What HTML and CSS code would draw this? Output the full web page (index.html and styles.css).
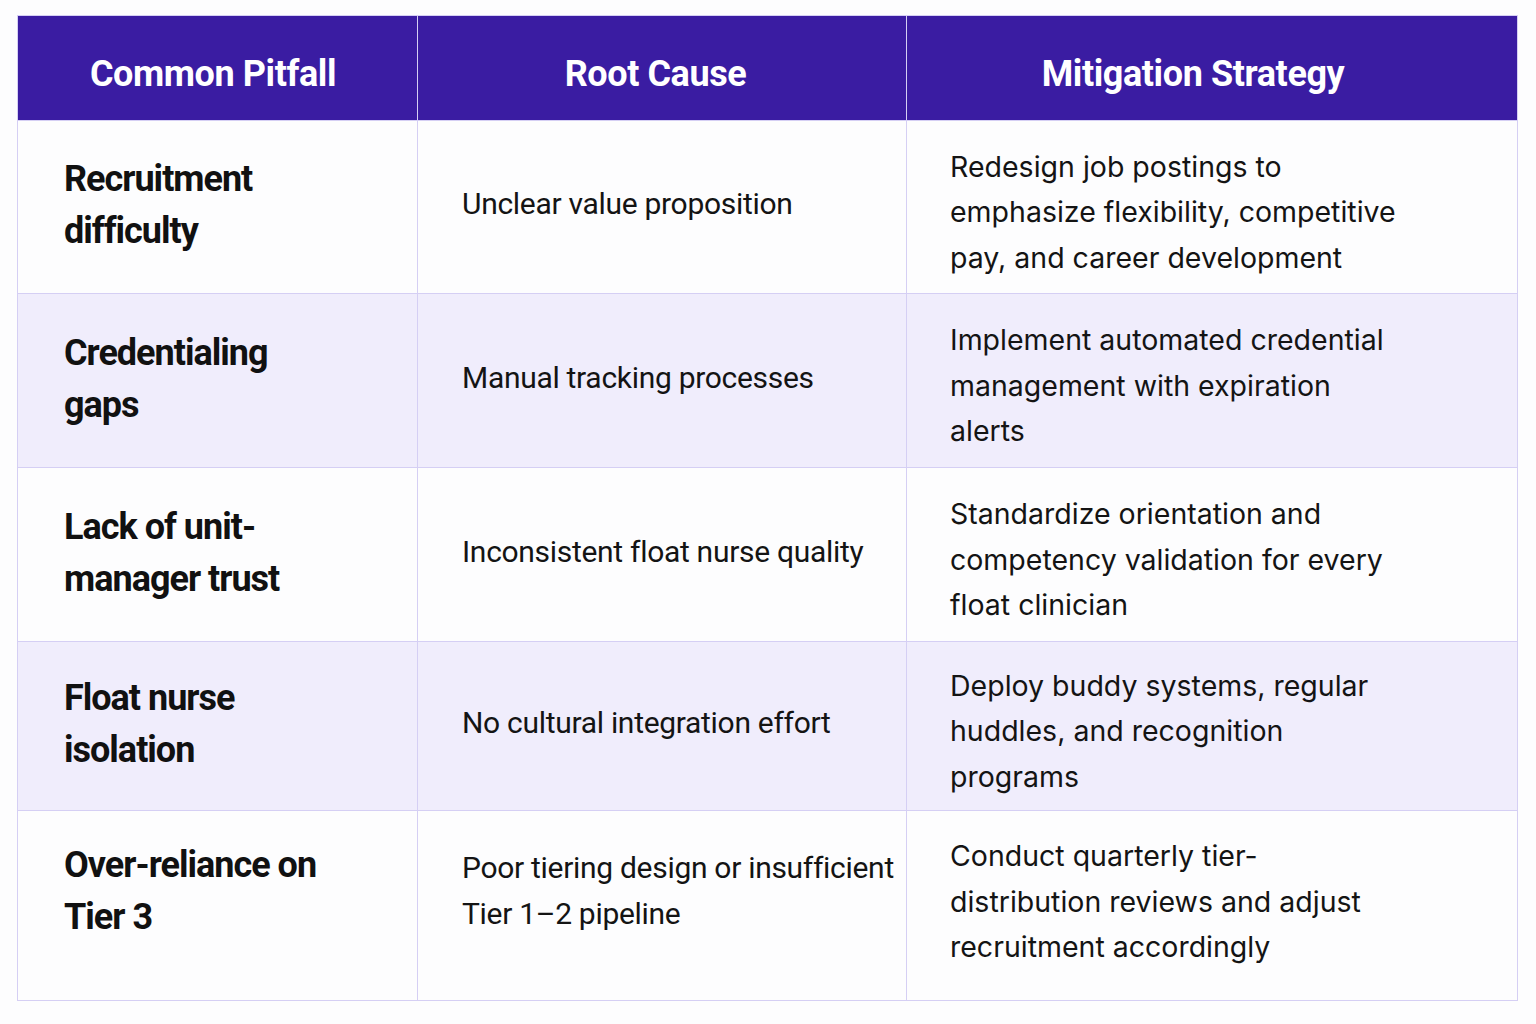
FILE: index.html
```html
<!DOCTYPE html>
<html lang="en">
<head>
<meta charset="utf-8">
<title>Float Pool Pitfalls</title>
<link rel="stylesheet" href="styles.css">
</head>
<body>
<div class="table">
  <div class="cell head head-pitfall">Common Pitfall</div>
  <div class="cell head head-cause">Root Cause</div>
  <div class="cell head head-fix">Mitigation Strategy</div>

  <div class="cell pitfall">Recruitment<br>difficulty</div>
  <div class="cell cause">Unclear value proposition</div>
  <div class="cell fix">Redesign job postings to<br>emphasize flexibility, competitive<br>pay, and career development</div>

  <div class="cell pitfall alt">Credentialing<br>gaps</div>
  <div class="cell cause alt">Manual tracking processes</div>
  <div class="cell fix alt">Implement automated credential<br>management with expiration<br>alerts</div>

  <div class="cell pitfall">Lack of unit-<br>manager trust</div>
  <div class="cell cause">Inconsistent float nurse quality</div>
  <div class="cell fix">Standardize orientation and<br>competency validation for every<br>float clinician</div>

  <div class="cell pitfall alt">Float nurse<br>isolation</div>
  <div class="cell cause alt">No cultural integration effort</div>
  <div class="cell fix alt">Deploy buddy systems, regular<br>huddles, and recognition<br>programs</div>

  <div class="cell pitfall last">Over-reliance on<br>Tier 3</div>
  <div class="cell cause last">Poor tiering design or insufficient<br>Tier 1–2 pipeline</div>
  <div class="cell fix last">Conduct quarterly tier-<br>distribution reviews and adjust<br>recruitment accordingly</div>
</div>
</body>
</html>
```

FILE: styles.css
```css
html, body {
  margin: 0;
  padding: 0;
  background: #fdfdfe;
}

body {
  padding: 15px 0 0 17px;
  font-family: "Roboto", sans-serif;
  color: #141414;
}

.table {
  display: grid;
  width: 1501px;
  grid-template-columns: 399px 488px 610px;
  grid-template-rows: 104px 172px 173px 173px 168px 189px;
  gap: 1px;
  padding: 1px;
  background: #d5cff4;
  box-sizing: border-box;
}

.cell {
  display: flex;
  align-items: center;
  background: #fdfdfe;
  box-sizing: border-box;
  white-space: nowrap;
}

.cell.alt {
  background: #f0edfc;
}

.head {
  justify-content: center;
  background: #3a1ca2;
  color: #ffffff;
  font-family: "Roboto", sans-serif;
  font-weight: 700;
  font-size: 36px;
  letter-spacing: -0.4px;
  padding-top: 12px;
}

.head-pitfall {
  padding-right: 9px;
}

.head-cause {
  padding-right: 13px;
}

.head-fix {
  padding-right: 38px;
}

.pitfall {
  padding: 0 0 4px 46px;
  font-family: "Roboto", sans-serif;
  font-weight: 700;
  font-size: 36px;
  letter-spacing: -1px;
  line-height: 52px;
  color: #111111;
}

.cause {
  padding: 0 0 6px 44px;
  font-family: "Roboto", sans-serif;
  font-size: 30px;
  letter-spacing: -0.3px;
  line-height: 46px;
}

.fix {
  padding: 16px 0 6px 43px;
  font-family: "Inter", sans-serif;
  font-size: 28.5px;
  line-height: 45.5px;
}

.cell.last {
  padding-bottom: 30px;
}

.cell.fix.last {
  padding-bottom: 24px;
}
```
